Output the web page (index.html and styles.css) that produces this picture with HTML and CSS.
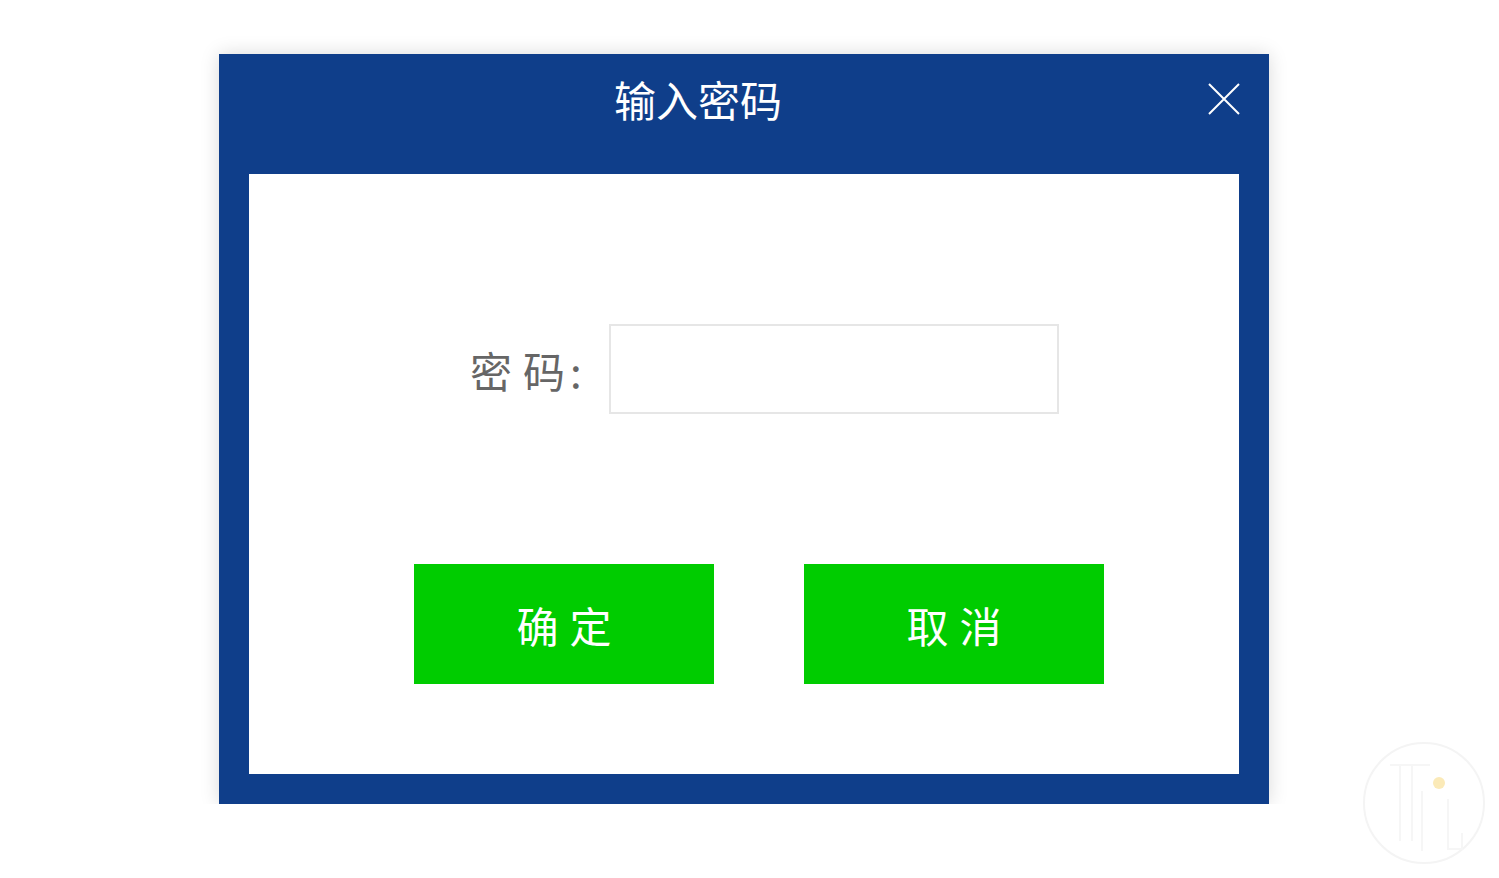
FILE: index.html
```html
<!doctype html>
<html>
    <head>
        <meta charset="utf-8">
        <title>输入密码</title>
        <!-- Style -->
        <link rel="stylesheet" href="styles.css">
    </head>
    <body>
        <div class="dialog">
            <div class="dialog-header">
                <h2 class="dialog-title">输入密码</h2>
                <span class="close-btn">
                    <svg width="32" height="32" viewBox="0 0 32 32">
                        <path d="M1 1 L31 31 M31 1 L1 31" stroke="#fff" stroke-width="2" fill="none"/>
                    </svg>
                </span>
            </div>
            <div class="dialog-body">
                <div class="form-row">
                    <label class="form-label"><span class="spaced">密</span>码<span class="colon">:</span></label>
                    <input class="form-input" type="password">
                </div>
                <div class="btn-row">
                    <button class="btn">确定</button>
                    <button class="btn">取消</button>
                </div>
            </div>
        </div>

        <!-- watermark -->
        <div class="watermark">
            <svg width="124" height="124" viewBox="0 0 124 124">
                <circle cx="62" cy="62" r="60" stroke="#f4f4f4" stroke-width="2" fill="none"/>
                <path d="M28 24 H68 M38 24 V100 M50 24 V100 M60 50 V110 M86 58 V108 H100 V92" stroke="#f6f6f6" stroke-width="2" fill="none"/>
                <circle cx="77" cy="42" r="6" fill="#fbeab8"/>
            </svg>
        </div>
    </body>
</html>
```

FILE: styles.css
```css
body {
    margin: 0;
    padding: 54px 0 0 219px;
    background-color: #fff;
    font-family: "Noto Sans CJK SC", "Noto Sans", sans-serif;
}

.dialog {
    width: 1050px;
    height: 750px;
    background-color: #0f3e8a;
    box-shadow: 0 0 18px rgba(0,0,0,0.15);
    display: flex;
    flex-direction: column;
}

.dialog-header {
    height: 120px;
    position: relative;
    text-align: center;
}

.dialog-title {
    margin: 0;
    padding: 21px 92px 0 0;
    font-size: 42px;
    line-height: 48px;
    font-weight: normal;
    color: #fff;
}

.close-btn {
    position: absolute;
    top: 29px;
    right: 29px;
    width: 32px;
    height: 32px;
}

.close-btn svg {
    display: block;
}

.dialog-body {
    margin: 0 30px 30px;
    flex: 1;
    background-color: #fff;
}

.form-row {
    display: flex;
    align-items: center;
    padding: 150px 0 0 221px;
}

.form-label {
    font-size: 42px;
    color: #666;
    width: 139px;
}

.spaced {
    margin-right: 11px;
}

.colon {
    margin-left: 5px;
}

.form-input {
    width: 450px;
    height: 90px;
    box-sizing: border-box;
    border: 2px solid #e6e6e6;
    outline: none;
}

.btn-row {
    display: flex;
    gap: 90px;
    padding: 150px 0 0 165px;
}

.btn {
    width: 300px;
    height: 120px;
    border: none;
    background-color: #00cc00;
    color: #fff;
    font-family: "Noto Sans CJK SC", "Noto Sans", sans-serif;
    font-size: 42px;
    letter-spacing: 11px;
    padding: 0 0 0 11px;
}

.watermark {
    position: absolute;
    left: 1362px;
    top: 741px;
}
```
